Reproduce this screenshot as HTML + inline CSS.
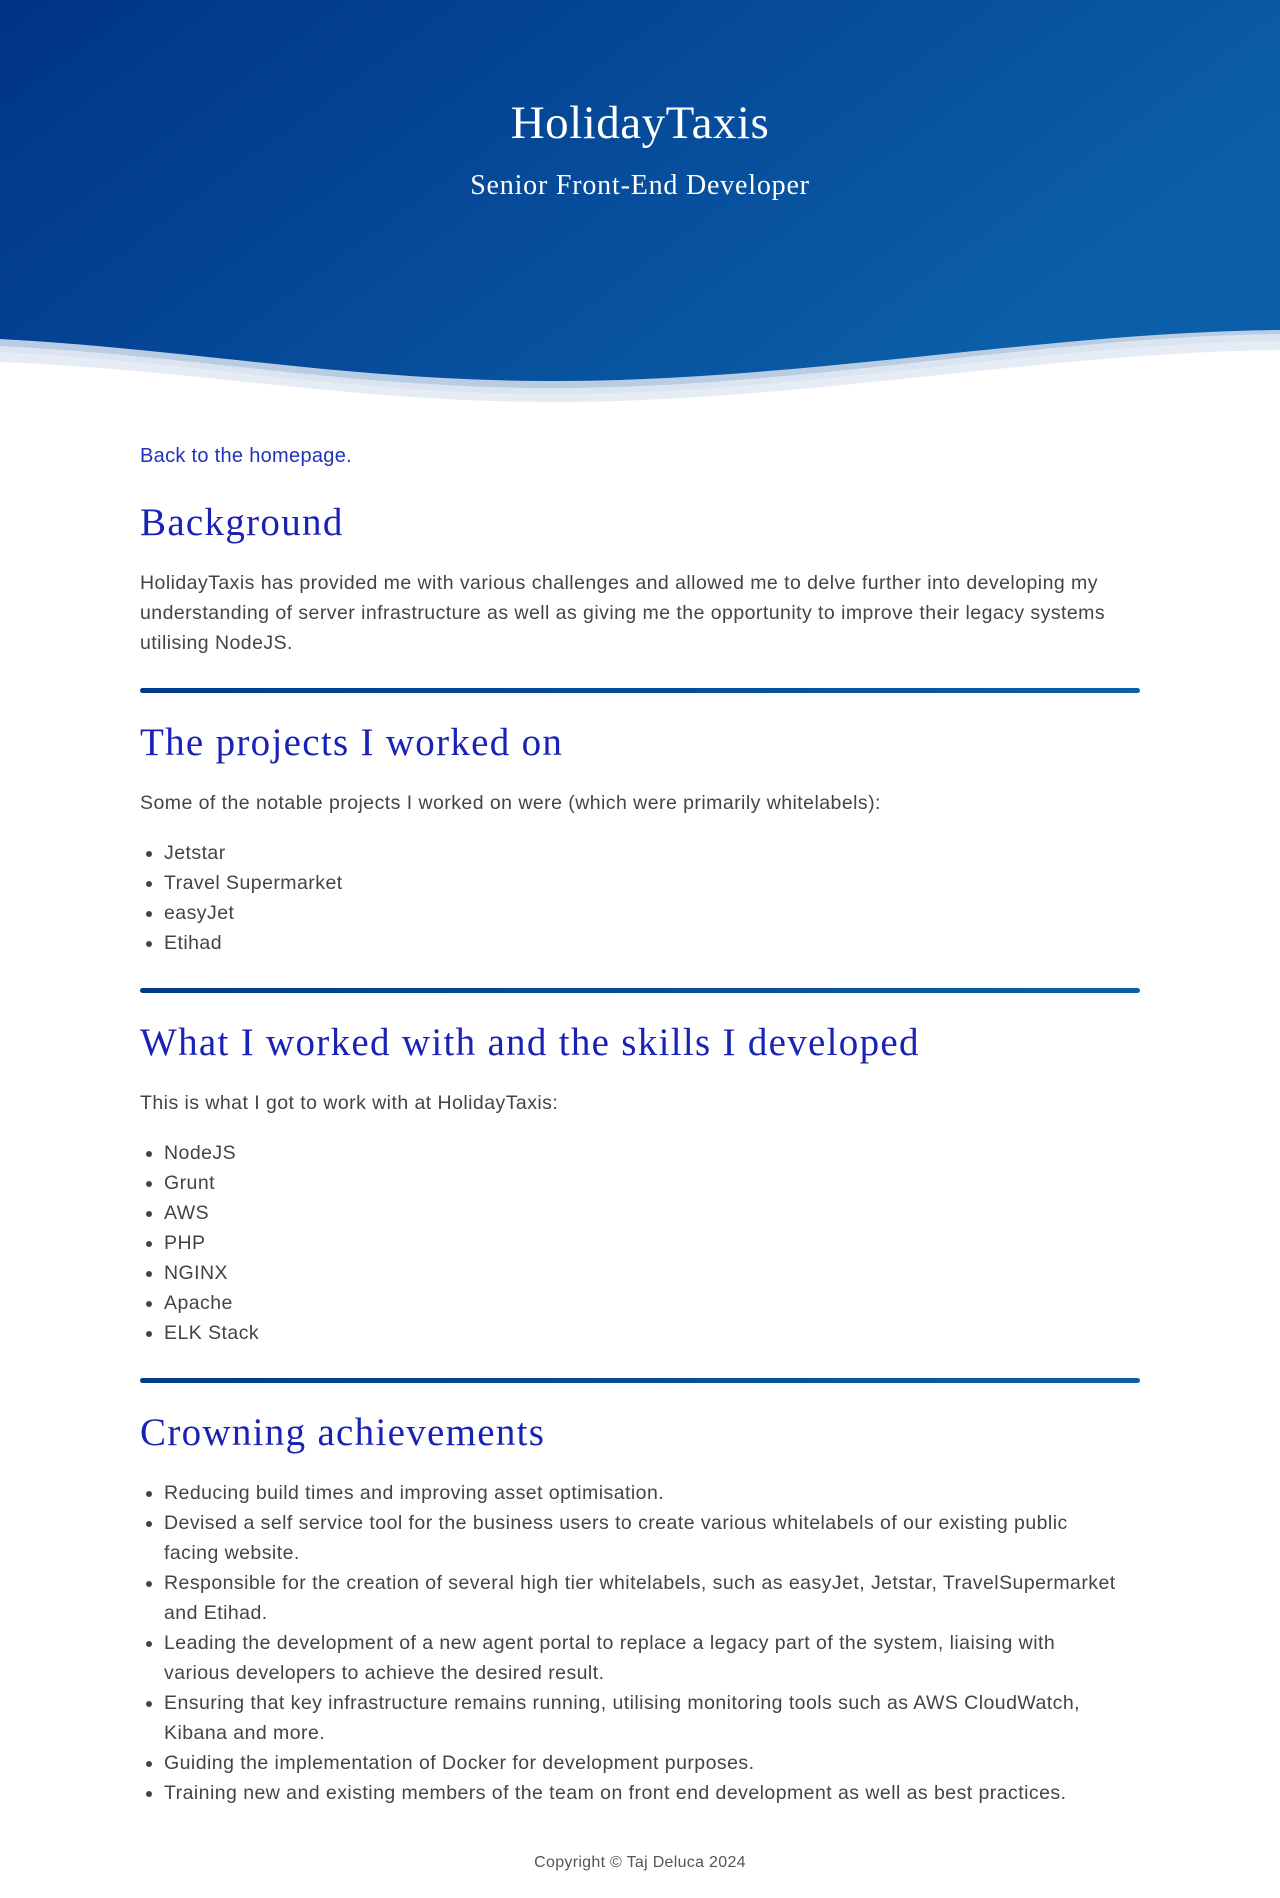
<!DOCTYPE html>
<html><head><meta charset="utf-8"><style>
body{margin:0;background:#fff;font-family:"Liberation Sans",sans-serif;color:#444;}
.hdr{position:relative;height:410px;}
.hdr svg{position:absolute;left:0;top:0}
.hdr h1{position:absolute;top:96px;left:0;right:0;text-align:center;margin:0;font:400 47px "Liberation Serif",serif;color:#fff;letter-spacing:0.5px}
.hdr h2{position:absolute;top:170px;left:0;right:0;text-align:center;margin:0;font:400 28px "Liberation Serif",serif;color:#fff;letter-spacing:0.8px}
.main{position:absolute;top:0;left:140px;width:1000px;}
a{color:#2233bb;text-decoration:none;font-size:20px;letter-spacing:0.3px}
h3{font:400 39px "Liberation Serif",serif;color:#1a22b5;margin:0;position:absolute;left:0;white-space:nowrap;letter-spacing:1.3px}
p,ul{font-size:19.5px;line-height:30px;margin:0;position:absolute;left:0;width:1000px;letter-spacing:0.45px}
ul{padding-left:24px;box-sizing:border-box}
.hr{position:absolute;left:0;width:1000px;height:5px;border-radius:3px;background:linear-gradient(90deg,#003a8c,#0a5fa8)}
.ft{position:absolute;top:1854px;left:0;width:1280px;text-align:center;font-size:16px;color:#555;letter-spacing:0.3px}
</style></head><body>
<div class="hdr">
<svg width="1280" height="410" viewBox="0 0 1280 410">
<defs><linearGradient id="g" x1="0" y1="0" x2="1" y2="0.4"><stop offset="0" stop-color="#003388"/><stop offset="1" stop-color="#0b5fa8"/></linearGradient></defs>
<path d="M0 0H1280V350C1050 352 800 402 555 402C350 402 200 370 0 362Z" fill="#e6ecf5"/>
<path d="M0 0H1280V341C1050 343 800 394 555 394C350 394 200 362 0 352Z" fill="#dce4f0"/>
<path d="M0 0H1280V334C1050 336 800 388 555 388C350 388 200 356 0 346Z" fill="#b8cce4"/>
<path d="M0 0H1280V330C1050 332 800 381 555 381C350 381 200 350 0 339Z" fill="url(#g)"/>
</svg>
<h1>HolidayTaxis</h1>
<h2>Senior Front-End Developer</h2>
</div>
<div class="main">
<a href="#" style="position:absolute;top:445px;left:0">Back to the homepage.</a>
<h3 style="top:500px">Background</h3>
<p style="top:568px">HolidayTaxis has provided me with various challenges and allowed me to delve further into developing my understanding of server infrastructure as well as giving me the opportunity to improve their legacy systems utilising NodeJS.</p>
<div class="hr" style="top:688px"></div>
<h3 style="top:720px">The projects I worked on</h3>
<p style="top:788px">Some of the notable projects I worked on were (which were primarily whitelabels):</p>
<ul style="top:838px"><li>Jetstar</li><li>Travel Supermarket</li><li>easyJet</li><li>Etihad</li></ul>
<div class="hr" style="top:988px"></div>
<h3 style="top:1020px">What I worked with and the skills I developed</h3>
<p style="top:1088px">This is what I got to work with at HolidayTaxis:</p>
<ul style="top:1138px"><li>NodeJS</li><li>Grunt</li><li>AWS</li><li>PHP</li><li>NGINX</li><li>Apache</li><li>ELK Stack</li></ul>
<div class="hr" style="top:1378px"></div>
<h3 style="top:1410px">Crowning achievements</h3>
<ul style="top:1478px"><li>Reducing build times and improving asset optimisation.</li><li>Devised a self service tool for the business users to create various whitelabels of our existing public<br>facing website.</li><li>Responsible for the creation of several high tier whitelabels, such as easyJet, Jetstar, TravelSupermarket and Etihad.</li><li>Leading the development of a new agent portal to replace a legacy part of the system, liaising with<br>various developers to achieve the desired result.</li><li>Ensuring that key infrastructure remains running, utilising monitoring tools such as AWS CloudWatch, Kibana and more.</li><li>Guiding the implementation of Docker for development purposes.</li><li>Training new and existing members of the team on front end development as well as best practices.</li></ul>
</div>
<div class="ft">Copyright © Taj Deluca 2024</div>
</body></html>
